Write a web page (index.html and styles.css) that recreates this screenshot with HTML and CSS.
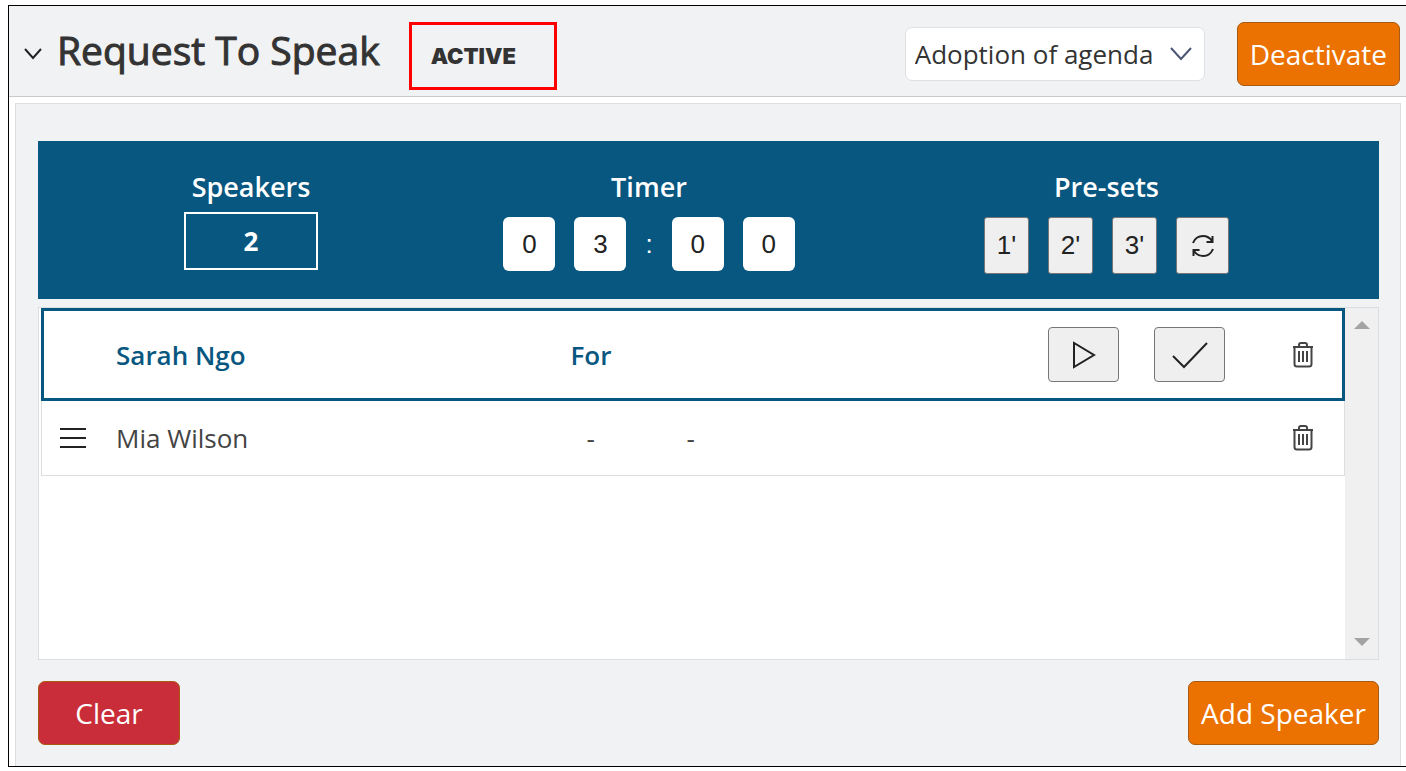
FILE: index.html
```html
<!DOCTYPE html>
<html lang="en">

<head>
  <meta charset="UTF-8">
  <meta name="viewport" content="width=device-width, initial-scale=1.0">
  <title>Request To Speak</title>
  <link rel="stylesheet" href="styles.css">
</head>

<body>
  <main class="widget">
    <header class="widget-header">
      <button class="toggle" aria-label="Collapse">
        <svg width="20" height="16" viewBox="0 0 20 16"><path d="M2 3l8 9 8-9" /></svg>
      </button>
      <h1>Request To Speak</h1>
      <span class="status">ACTIVE</span>
      <div class="agenda">
        <select aria-label="Agenda item">
          <option>Adoption of agenda</option>
        </select>
        <svg width="26" height="18" viewBox="0 0 26 18"><path d="M3 3l10 11L23 3" /></svg>
      </div>
      <button class="btn btn-orange">Deactivate</button>
    </header>

    <section class="panel">
      <div class="summary">
        <div class="summary-col">
          <h2>Speakers</h2>
          <div class="count">2</div>
        </div>
        <div class="summary-col">
          <h2>Timer</h2>
          <div class="timer">
            <input type="text" value="0" maxlength="1" aria-label="Tens of minutes">
            <input type="text" value="3" maxlength="1" aria-label="Minutes">
            <span>:</span>
            <input type="text" value="0" maxlength="1" aria-label="Tens of seconds">
            <input type="text" value="0" maxlength="1" aria-label="Seconds">
          </div>
        </div>
        <div class="summary-col">
          <h2>Pre-sets</h2>
          <div class="presets">
            <button>1'</button>
            <button>2'</button>
            <button>3'</button>
            <button class="reset" aria-label="Reset timer">
              <svg width="22" height="24" viewBox="0 0 22 24">
                <path d="M1 9C3 4 7 2 11 2c4 0 7 2 9 5M20.500 2v6h-6M21 15c-2 5-6 7-10 7-4 0-7-2-9-5M1.500 22v-6h6" />
              </svg>
            </button>
          </div>
        </div>
      </div>

      <div class="list">
        <ul class="speakers">
          <li class="speaker current">
            <span></span>
            <span>Sarah Ngo</span>
            <span>For</span>
            <span></span>
            <div class="actions">
              <button aria-label="Start">
                <svg width="24" height="30" viewBox="0 0 24 30"><path d="M2 3v24l20-12z" /></svg>
              </button>
              <button aria-label="Done">
                <svg width="38" height="30" viewBox="0 0 38 30"><path d="M2 16l11 11L36 3" /></svg>
              </button>
            </div>
            <button class="delete" aria-label="Remove Sarah Ngo">
              <svg width="20" height="26" viewBox="0 0 20 26">
                <path d="M0 5h20M6 5V3q0-2 2-2h4q2 0 2 2v2M1.500 5v17q0 2.500 2.500 2.500h12q2.500 0 2.500-2.500V5" />
                <path d="M6 9v11M10 9v11M14 9v11" />
              </svg>
            </button>
          </li>
          <li class="speaker">
            <button class="handle" aria-label="Move Mia Wilson">
              <svg width="26" height="20" viewBox="0 0 26 20"><path d="M0 1h26M0 10h26M0 19h26" /></svg>
            </button>
            <span>Mia Wilson</span>
            <span class="dash">-</span>
            <span class="dash">-</span>
            <span></span>
            <button class="delete" aria-label="Remove Mia Wilson">
              <svg width="20" height="26" viewBox="0 0 20 26">
                <path d="M0 5h20M6 5V3q0-2 2-2h4q2 0 2 2v2M1.500 5v17q0 2.500 2.500 2.500h12q2.500 0 2.500-2.500V5" />
                <path d="M6 9v11M10 9v11M14 9v11" />
              </svg>
            </button>
          </li>
        </ul>
        <div class="scrollbar" aria-hidden="true">
          <svg width="16" height="8" viewBox="0 0 16 8"><path d="M0 8l8-8 8 8z" /></svg>
          <svg width="16" height="8" viewBox="0 0 16 8"><path d="M0 0l8 8 8-8z" /></svg>
        </div>
      </div>

      <div class="footer">
        <button class="btn btn-red">Clear</button>
        <button class="btn btn-orange">Add Speaker</button>
      </div>
    </section>
  </main>
</body>

</html>
```
FILE: styles.css
```css
* {
  box-sizing: border-box;
}

body {
  margin: 0;
  padding: 5px 0 4px 8px;
  height: 100vh;
  background-color: #fff;
  font-family: "Open Sans", "Noto Sans", sans-serif;
  font-size: 26px;
  color: #444;
}

button,
select,
input {
  margin: 0;
  padding: 0;
  font-family: inherit;
  font-size: inherit;
  color: inherit;
}

button {
  cursor: pointer;
}

svg {
  display: block;
  fill: none;
  stroke: #222;
  stroke-width: 2;
}

.widget {
  display: flex;
  flex-direction: column;
  min-height: 100%;
  border: 1px solid #000;
  border-right: none;
}

.widget-header {
  display: flex;
  align-items: center;
  height: 91px;
  padding: 6px 6px 0 14px;
  background-color: #f1f2f4;
  border-bottom: 1px solid #c8c9cb;
}

.toggle,
.handle,
.delete {
  display: flex;
  border: none;
  background: none;
}

h1 {
  margin: 0 0 10px 14px;
  font-size: 39px;
  font-weight: 400;
  color: #333;
  -webkit-text-stroke: 1px #333;
}

.status {
  display: flex;
  align-items: center;
  width: 148px;
  height: 68px;
  margin-top: 3px;
  margin-left: 29px;
  padding-left: 19px;
  border: 3px solid #f00;
  font-family: Inter, sans-serif;
  font-size: 22px;
  font-weight: 900;
  color: #333;
}

.agenda {
  position: relative;
  width: 300px;
  margin: 0 32px 0 auto;
}

.agenda select {
  width: 100%;
  height: 54px;
  padding-left: 9px;
  border: 1px solid #dfe0e4;
  border-radius: 7px;
  background-color: #fff;
  color: #333;
  appearance: none;
}

.agenda svg {
  position: absolute;
  top: 18px;
  right: 11px;
  stroke: #4c5574;
  pointer-events: none;
}

.btn {
  height: 64px;
  padding: 0 12px;
  border: 1px solid #a85a10;
  border-radius: 7px;
  font-size: 28px;
  color: #fff;
}

.btn-orange {
  background-color: #eb7100;
}

.btn-red {
  width: 142px;
  background-color: #c92d39;
}

.panel {
  flex: 1;
  display: flex;
  flex-direction: column;
  margin: 6px 5px 0 6px;
  padding: 37px 21px 21px 22px;
  background-color: #f1f2f4;
  border: 1px solid #dcdddf;
  border-bottom: none;
}

.summary {
  display: grid;
  grid-template-columns: 426fr 370fr 545fr;
  height: 158px;
  padding-top: 28px;
  background-color: #085780;
}

.summary-col {
  display: flex;
  flex-direction: column;
  align-items: center;
}

h2 {
  margin: 0;
  font-size: 27px;
  font-weight: 600;
  line-height: 36px;
  color: #fff;
}

.count {
  width: 134px;
  margin-top: 7px;
  border: 2px solid #fff;
  font-weight: 700;
  line-height: 54px;
  text-align: center;
  color: #fff;
}

.timer,
.presets {
  display: flex;
  align-items: center;
  gap: 19px;
  margin-top: 12px;
  font-family: "Liberation Sans", Arial, sans-serif;
  color: #222;
}

.timer input {
  width: 52px;
  height: 54px;
  border: none;
  border-radius: 6px;
  background-color: #fff;
  text-align: center;
}

.timer span {
  color: #fff;
}

.presets button {
  display: flex;
  align-items: center;
  justify-content: center;
  width: 45px;
  height: 57px;
  border: 1px solid #767676;
  border-radius: 3px;
  background-color: #efefef;
}

.presets .reset {
  width: 53px;
}

.list {
  flex: 1;
  display: flex;
  margin-top: 8px;
  background-color: #fff;
  border: 1px solid #dcdddf;
}

.speakers {
  flex: 1;
  margin: 0;
  padding: 0 0 0 2px;
  list-style: none;
}

.speaker {
  display: grid;
  grid-template-columns: 56px 455fr 100fr 378fr 230px 50px;
  align-items: center;
  height: 75px;
  padding-left: 18px;
  padding-right: 16px;
  border: 1px solid #dcdddf;
  border-top: none;
}

.speaker.current {
  height: 93px;
  padding-left: 16px;
  padding-right: 14px;
  border: 3px solid #085780;
  font-weight: 600;
  color: #085780;
}

.dash {
  padding-left: 16px;
}

.actions {
  display: flex;
  gap: 35px;
}

.actions button {
  display: flex;
  align-items: center;
  justify-content: center;
  width: 71px;
  height: 55px;
  border: 1px solid #767676;
  border-radius: 4px;
  background-color: #efefef;
}

.delete {
  justify-self: center;
}

.delete svg {
  stroke: #444;
}

.scrollbar {
  display: flex;
  flex-direction: column;
  align-items: center;
  justify-content: space-between;
  width: 33px;
  padding: 13px 0;
  background-color: #f0f0f0;
}

.scrollbar svg {
  fill: #a3a3a3;
  stroke: none;
}

.footer {
  display: flex;
  justify-content: space-between;
  margin-top: 21px;
}
```
